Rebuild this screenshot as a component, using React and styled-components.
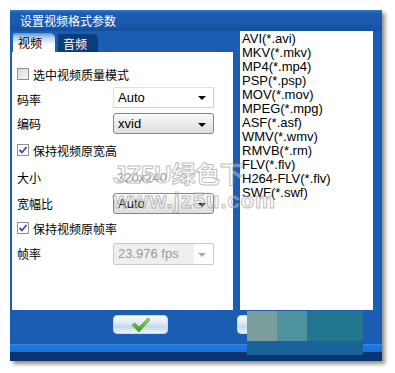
import React from 'react';
import styled, { createGlobalStyle } from 'styled-components';

const Global = createGlobalStyle`
  html, body { margin: 0; padding: 0; background: #fff; }
  body { font-family: "Liberation Sans", "Noto Sans CJK SC", sans-serif; }
`;

const Page = styled.div`
  padding: 10px 0 0 10px;
  width: 395px;
  height: 373px;
  box-sizing: border-box;
`;

const Window = styled.div`
  position: relative;
  width: 372px;
  height: 351px;
  background: #1b5db2;
  box-shadow: 3px 3px 4px rgba(0, 0, 0, 0.45);
  display: flex;
  flex-direction: column;
`;

const TitleBar = styled.div`
  height: 21px;
  padding-left: 10px;
  display: flex;
  align-items: center;
  color: #fff;
  font-size: 12px;
  font-family: "Noto Sans CJK SC", sans-serif;
  background: linear-gradient(#3a7acc 0, #1c5eb3 3px, #1a5aaf 60%, #154fa0 100%);
`;

const Body = styled.div`
  display: flex;
  height: 279px;
  padding: 0 9px 0 2px;
  gap: 7px;
`;

const LeftCol = styled.div`
  width: 221px;
  display: flex;
  flex-direction: column;
`;

const TabRow = styled.div`
  height: 21px;
  display: flex;
  align-items: flex-end;
  gap: 3px;
  padding-left: 1px;
`;

const Tab = styled.div`
  height: ${p => (p.$active ? 19 : 18)}px;
  width: ${p => (p.$active ? 42 : 40)}px;
  box-sizing: border-box;
  padding-left: 5px;
  display: flex;
  align-items: center;
  font-size: 12px;
  font-family: "Noto Sans CJK SC", sans-serif;
  border-radius: 2px 5px 0 0;
  color: ${p => (p.$active ? '#000' : '#fff')};
  background: ${p =>
    p.$active
      ? 'linear-gradient(#5f93d4 0, #bcd3f0 5px, #ffffff 12px)'
      : '#0d3c7a'};
`;

const Panel = styled.div`
  flex: 1;
  background: #fff;
  padding: 12px 0 0 5px;
  display: flex;
  flex-direction: column;
`;

const Row = styled.div`
  margin-top: ${p => p.$mt || 0}px;
  height: ${p => p.$h}px;
  display: flex;
  align-items: center;
  font-size: 12px;
  font-family: "Noto Sans CJK SC", sans-serif;
  color: #000;
`;

const Label = styled.div`
  width: 96px;
  align-self: ${p => p.$align || 'center'};
  padding-top: ${p => p.$pt || 0}px;
`;

const Box = styled.span`
  width: 12px;
  height: 12px;
  box-sizing: border-box;
  border: 1px solid #8e8f8f;
  background: ${p => (p.$checked ? '#fff' : 'linear-gradient(135deg, #d8d8d8, #f8f8f8)')};
  margin-right: 4px;
  display: flex;
  align-items: center;
  justify-content: center;
`;

const Select = styled.div`
  width: 101px;
  height: ${p => p.$h || 21}px;
  box-sizing: border-box;
  display: flex;
  align-items: center;
  padding-left: 4px;
  font-family: "Liberation Sans", sans-serif;
  font-size: 13px;
  position: relative;
  ${p =>
    p.$variant === 'flat' &&
    `border: 1px solid #e2e2e2; border-right-color:#cfcfcf; border-bottom-color:#cfcfcf; background:#fff; color:#000;`}
  ${p =>
    p.$variant === 'raised' &&
    `border: 1px solid #858585; border-radius: 3px; background: linear-gradient(#fbfbfb, #ececec 50%, #dedede); color:#000;`}
  ${p =>
    p.$variant === 'disabled' &&
    `border: 1px solid #c9c9c9; border-radius: 2px; background: linear-gradient(90deg, #efefef 0, #efefef 80px, #fff 80px); color:#9a9a9a;`}
`;

const Arrow = styled.span`
  position: absolute;
  right: 7px;
  top: 50%;
  margin-top: -1px;
  width: 0;
  height: 0;
  border-left: 4px solid transparent;
  border-right: 4px solid transparent;
  border-top: 4px solid ${p => (p.$dim ? '#a8a8a8' : '#000')};
`;

const Disabled = styled.div`
  color: #9a9a9a;
  font-family: "Liberation Sans", sans-serif;
  font-size: 13px;
  padding-left: 4px;
`;

const List = styled.div`
  width: 133px;
  background: #fff;
  padding: 1px 0 0 2px;
  box-sizing: border-box;
  font-family: "Liberation Sans", sans-serif;
  font-size: 13px;
  line-height: 14px;
  color: #000;
`;

const Footer = styled.div`
  height: 34px;
  display: flex;
  padding: 5px 0 0 103px;
  box-sizing: border-box;
  gap: 69px;
`;

const Button = styled.div`
  width: 55px;
  height: 19px;
  box-sizing: border-box;
  border-radius: 4px;
  border: 1px solid #c4dbf5;
  background: linear-gradient(#f6faff 0, #dde9f8 45%, #c4d6ee 60%, #e8f1fb 100%);
  display: flex;
  align-items: center;
  justify-content: center;
`;

const Strip = styled.div`
  height: 8px;
  background: linear-gradient(#4f9af0 0, #2079e0 1px, #1a6fd6 100%);
`;

const Base = styled.div`
  height: 9px;
  background: #0b3570;
`;

const Mosaic = styled.div`
  position: absolute;
  left: 237px;
  top: 301px;
  width: 116px;
  display: grid;
  grid-template-columns: 30px 30px 56px;
  grid-template-rows: 30px 14px;
`;

const Tile = styled.div`
  background: ${p => p.$c};
  grid-column: ${p => p.$span || 'auto'};
`;

const Watermark = styled.div`
  position: absolute;
  left: 103px;
  top: ${p => p.$top}px;
  font-family: "Liberation Sans", "Noto Sans CJK SC", sans-serif;
  font-weight: bold;
  font-size: ${p => p.$size}px;
  line-height: 1;
  color: rgba(255, 255, 255, 0.35);
  -webkit-text-stroke: 1px rgba(130, 130, 130, 0.55);
  letter-spacing: ${p => p.$ls || 0}px;
  pointer-events: none;
  white-space: nowrap;
`;

const Check = () => (
  <svg width="10" height="10" viewBox="0 0 10 10">
    <path d="M1.5 5 L4 7.5 L8.5 2" fill="none" stroke="#3b4fa8" strokeWidth="1.8" />
  </svg>
);

const CheckRow = ({ checked, children, mt }) => (
  <Row $h={20} $mt={mt}>
    <Box $checked={checked}>{checked && <Check />}</Box>
    {children}
  </Row>
);

const OkMark = () => (
  <svg width="22" height="16" viewBox="0 0 22 16">
    <defs>
      <linearGradient id="g" x1="0" y1="0" x2="0" y2="1">
        <stop offset="0" stopColor="#9be05a" />
        <stop offset="1" stopColor="#2f9a1c" />
      </linearGradient>
    </defs>
    <path d="M2 8 L5 6 L9 10 L18 1 L20 3 L9 15 Z" fill="url(#g)" stroke="#3d8f22" strokeWidth="0.6" />
  </svg>
);

const formats = [
  'AVI(*.avi)', 'MKV(*.mkv)', 'MP4(*.mp4)', 'PSP(*.psp)', 'MOV(*.mov)', 'MPEG(*.mpg)',
  'ASF(*.asf)', 'WMV(*.wmv)', 'RMVB(*.rm)', 'FLV(*.flv)', 'H264-FLV(*.flv)', 'SWF(*.swf)',
];

export default function App() {
  return (
    <Page>
      <Global />
      <Window>
        <TitleBar>设置视频格式参数</TitleBar>
        <Body>
          <LeftCol>
            <TabRow>
              <Tab $active>视频</Tab>
              <Tab>音频</Tab>
            </TabRow>
            <Panel>
              <CheckRow>选中视频质量模式</CheckRow>
              <Row $h={22} $mt={2}>
                <Label $pt={5}>码率</Label>
                <Select $variant="flat">Auto<Arrow /></Select>
              </Row>
              <Row $h={23} $mt={4}>
                <Label>编码</Label>
                <Select $variant="raised">xvid<Arrow /></Select>
              </Row>
              <CheckRow checked mt={5}>保持视频原宽高</CheckRow>
              <Row $h={20} $mt={7}>
                <Label>大小</Label>
                <Disabled>320x240</Disabled>
              </Row>
              <Row $h={23} $mt={5}>
                <Label>宽幅比</Label>
                <Select $variant="raised">Auto<Arrow /></Select>
              </Row>
              <CheckRow checked mt={3}>保持视频原帧率</CheckRow>
              <Row $h={23} $mt={4}>
                <Label>帧率</Label>
                <Select $variant="disabled" $h={22}>23.976 fps<Arrow $dim /></Select>
              </Row>
            </Panel>
          </LeftCol>
          <List>
            {formats.map(f => (
              <div key={f}>{f}</div>
            ))}
          </List>
        </Body>
        <Footer>
          <Button><OkMark /></Button>
          <Button />
        </Footer>
        <Strip />
        <Base />
        <Watermark $top={153} $size={24}>JZ5U绿色下</Watermark>
        <Watermark $top={180} $size={22} $ls={1}>www.jz5u.com</Watermark>
        <Mosaic>
          <Tile $c="#7b9e9c" />
          <Tile $c="#4e929e" />
          <Tile $c="#23768f" />
          <Tile $c="#19639a" $span="1 / 4" />
        </Mosaic>
      </Window>
    </Page>
  );
}
